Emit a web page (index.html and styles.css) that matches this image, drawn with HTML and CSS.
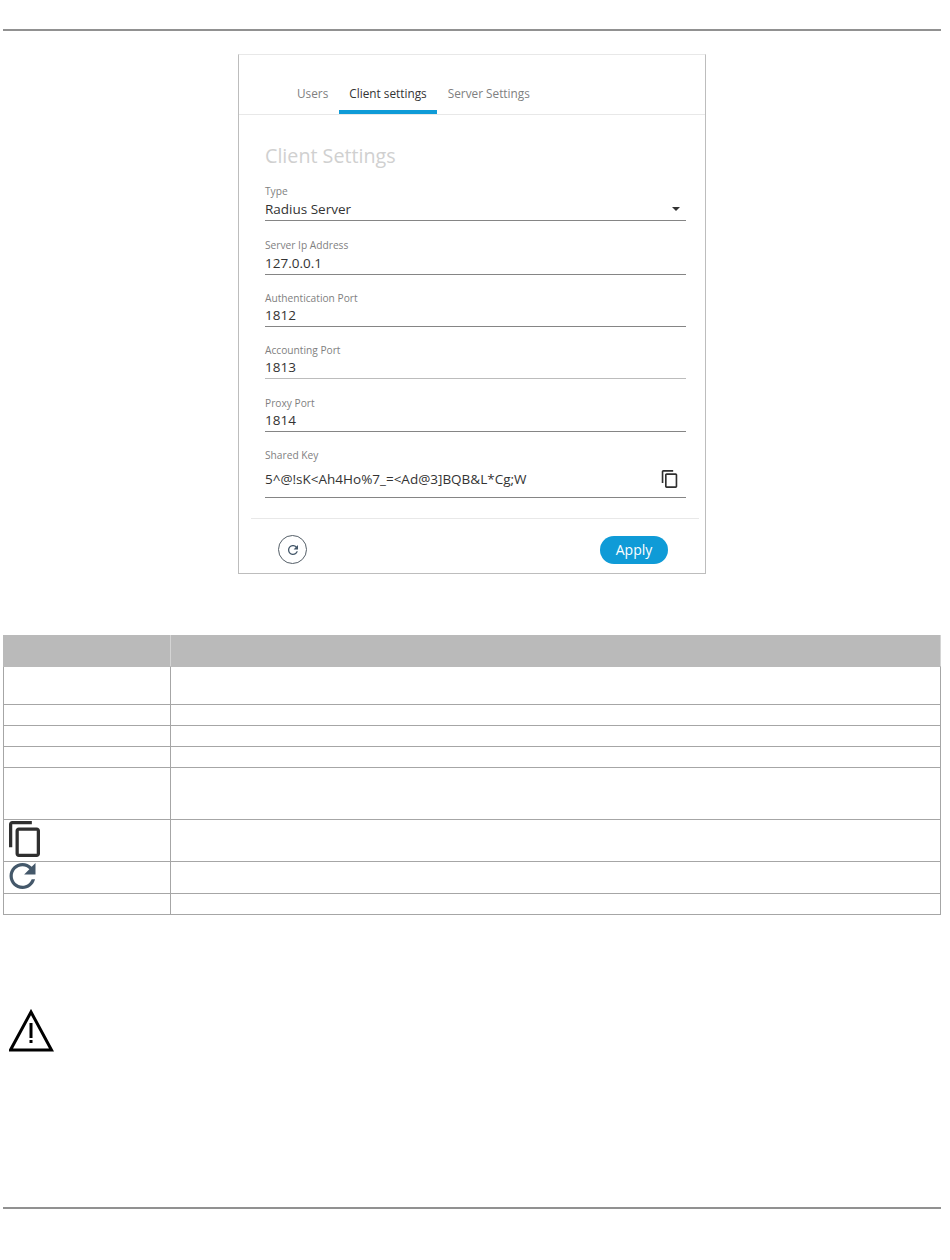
FILE: index.html
```html
<!DOCTYPE html>
<html lang="en">
  <head>
    <meta charset="UTF-8" />
    <meta name="viewport" content="width=device-width, initial-scale=1.0" />
    <title>Client Settings</title>
    <link rel="stylesheet" href="styles.css">
  </head>
  <body>
    <div class="rule rule-top"></div>

    <div class="card">
      <div class="tabs">
        <div class="tab">Users</div>
        <div class="tab active">Client settings</div>
        <div class="tab">Server Settings</div>
      </div>

      <div class="card-body">
        <h2>Client Settings</h2>

        <div class="field">
          <label>Type</label>
          <div class="value">
            Radius Server
            <span class="caret"></span>
          </div>
        </div>
        <div class="field field-ip">
          <label>Server Ip Address</label>
          <div class="value">127.0.0.1</div>
        </div>
        <div class="field">
          <label>Authentication Port</label>
          <div class="value">1812</div>
        </div>
        <div class="field field-light">
          <label>Accounting Port</label>
          <div class="value">1813</div>
        </div>
        <div class="field field-proxy">
          <label>Proxy Port</label>
          <div class="value">1814</div>
        </div>
        <div class="field field-key">
          <label>Shared Key</label>
          <div class="value">
            5^@!sK&lt;Ah4Ho%7_=&lt;Ad@3]BQB&amp;L*Cg;W
            <svg class="copy-small" viewBox="2 1 19 22">
              <path d="M16 1H4c-1.1 0-2 .9-2 2v14h2V3h12V1zm3 4H8c-1.1 0-2 .9-2 2v14c0 1.1.9 2 2 2h11c1.1 0 2-.9 2-2V7c0-1.1-.9-2-2-2zm0 16H8V7h11v14z" />
            </svg>
          </div>
        </div>
      </div>

      <div class="card-footer">
        <div class="refresh-btn">
          <svg viewBox="4 4 16 16">
            <path d="M17.65 6.35C16.2 4.9 14.21 4 12 4c-4.42 0-7.99 3.58-7.99 8s3.57 8 7.99 8c3.73 0 6.84-2.55 7.73-6h-2.08c-.82 2.33-3.04 4-5.65 4-3.31 0-6-2.69-6-6s2.69-6 6-6c1.66 0 3.14.69 4.22 1.78L13 11h7V4l-2.35 2.35z" />
          </svg>
        </div>
        <button type="button">Apply</button>
      </div>
    </div>

    <table class="legend">
      <tr class="head"><th></th><th></th></tr>
      <tr class="row-38"><td></td><td></td></tr>
      <tr class="row-21"><td></td><td></td></tr>
      <tr class="row-21"><td></td><td></td></tr>
      <tr class="row-21"><td></td><td></td></tr>
      <tr class="row-52"><td></td><td></td></tr>
      <tr class="row-42">
        <td>
          <svg class="copy-large" viewBox="2 1 19 22">
            <path d="M16 1H4c-1.1 0-2 .9-2 2v14h2V3h12V1zm3 4H8c-1.1 0-2 .9-2 2v14c0 1.1.9 2 2 2h11c1.1 0 2-.9 2-2V7c0-1.1-.9-2-2-2zm0 16H8V7h11v14z" />
          </svg>
        </td>
        <td></td>
      </tr>
      <tr class="row-32">
        <td>
          <svg class="refresh-large" viewBox="4 4 16 16">
            <path d="M17.65 6.35C16.2 4.9 14.21 4 12 4c-4.42 0-7.99 3.58-7.99 8s3.57 8 7.99 8c3.73 0 6.84-2.55 7.73-6h-2.08c-.82 2.33-3.04 4-5.65 4-3.31 0-6-2.69-6-6s2.69-6 6-6c1.66 0 3.14.69 4.22 1.78L13 11h7V4l-2.35 2.35z" />
          </svg>
        </td>
        <td></td>
      </tr>
      <tr class="row-21"><td></td><td></td></tr>
    </table>

    <svg class="warning" viewBox="0 0 46 43">
      <path class="warning-outline" d="M22 3 L42.5 41 H1.5 Z" />
      <path class="warning-mark" d="M22 14 V29 M22 31 V34" />
    </svg>

    <div class="rule rule-bottom"></div>
  </body>
</html>
```

FILE: styles.css
```css
body {
  margin: 0;
  background-color: #ffffff;
  font-family: "Open Sans", Arial, sans-serif;
  color: #333333;
}
.rule {
  height: 2px;
  margin: 0 9px 0 3px;
  background-color: #919191;
}
.rule-top {
  margin-top: 29px;
}
.rule-bottom {
  margin-top: 155px;
}
.card {
  box-sizing: border-box;
  width: 468px;
  height: 520px;
  margin: 23px 0 0 238px;
  border: 1px solid #bdbdbd;
  border-top-color: #e8e8e8;
  display: flex;
  flex-direction: column;
}
.tabs {
  display: flex;
  gap: 1px;
  height: 60px;
  padding-left: 48px;
  border-bottom: 1px solid #e8e8e8;
  box-sizing: border-box;
}
.tab {
  box-sizing: border-box;
  height: 59px;
  padding: 29px 10px 0;
  font-size: 11.8px;
  line-height: 18px;
  color: #808080;
  border-bottom: 4px solid transparent;
}
.tab.active {
  color: #333333;
  border-bottom-color: #0f9bd7;
}
.card-body {
  padding: 0 19px 0 26px;
}
h2 {
  margin: 27px 0 14px;
  font-size: 19.7px;
  line-height: 28px;
  font-weight: 400;
  color: #d0d0d0;
}
.field {
  margin-top: 15px;
  border-bottom: 1px solid #858585;
}
h2 + .field {
  margin-top: 0;
}
.field-ip {
  margin-top: 17px;
}
.field-proxy {
  margin-top: 16px;
}
.field-light {
  border-bottom-color: #bcbcbc;
}
.field label {
  display: block;
  height: 14px;
  font-size: 10.2px;
  line-height: 17px;
  color: #7f7f7f;
}
h2 + .field label,
.field-ip label {
  line-height: 15px;
}
.value {
  display: flex;
  align-items: center;
  justify-content: space-between;
  height: 22px;
  font-size: 13.5px;
  line-height: 22px;
  color: #333333;
}
.caret {
  width: 0;
  height: 0;
  margin-right: 6px;
  border-left: 4px solid transparent;
  border-right: 4px solid transparent;
  border-top: 4px solid #333333;
}
.field-key .value {
  height: 36px;
  padding-bottom: 1px;
  box-sizing: border-box;
}
.copy-small {
  width: 17px;
  height: 18px;
  margin-right: 8px;
  fill: #2f2f2f;
}
.card-footer {
  display: flex;
  align-items: center;
  justify-content: space-between;
  height: 54px;
  margin: 20px 6px 0 12px;
  padding: 8px 31px 0 27px;
  box-sizing: border-box;
  border-top: 1px solid #e8e8e8;
}
.refresh-btn {
  box-sizing: border-box;
  width: 29px;
  height: 29px;
  border: 1px solid #555f68;
  border-radius: 50%;
  display: flex;
  align-items: center;
  justify-content: center;
}
.refresh-btn svg {
  width: 10px;
  height: 10px;
  fill: #44586a;
}
button {
  width: 68px;
  height: 28px;
  padding: 0;
  border: none;
  border-radius: 14px;
  background-color: #0f9bd7;
  color: white;
  font-family: "Open Sans", Arial, sans-serif;
  font-size: 14px;
}
.legend {
  width: 938px;
  margin: 61px 0 0 3px;
  border-collapse: collapse;
  table-layout: fixed;
}
.legend td,
.legend th {
  padding: 0;
  border: 1px solid #a6a6a6;
}
.legend td:first-child,
.legend th:first-child {
  width: 166px;
}
.legend td:first-child {
  padding-left: 5px;
  box-sizing: border-box;
  vertical-align: top;
}
.legend .head th {
  height: 30px;
  background-color: #bababa;
  border-color: #bababa;
  border-right-color: #d4d4d4;
}
.row-21 td { height: 20px; }
.row-32 td { height: 31px; }
.row-38 td { height: 37px; }
.row-42 td { height: 41px; }
.row-52 td { height: 51px; }
.copy-large {
  display: block;
  width: 31px;
  height: 36px;
  margin-top: 1px;
  fill: #2f2f2f;
}
.refresh-large {
  display: block;
  width: 27px;
  height: 26px;
  margin-top: 1px;
  fill: #44586a;
}
.warning {
  display: block;
  width: 46px;
  height: 43px;
  margin: 94px 0 0 9px;
}
.warning-outline {
  fill: none;
  stroke: #000000;
  stroke-width: 3;
}
.warning-mark {
  fill: none;
  stroke: #000000;
  stroke-width: 3;
}
```
